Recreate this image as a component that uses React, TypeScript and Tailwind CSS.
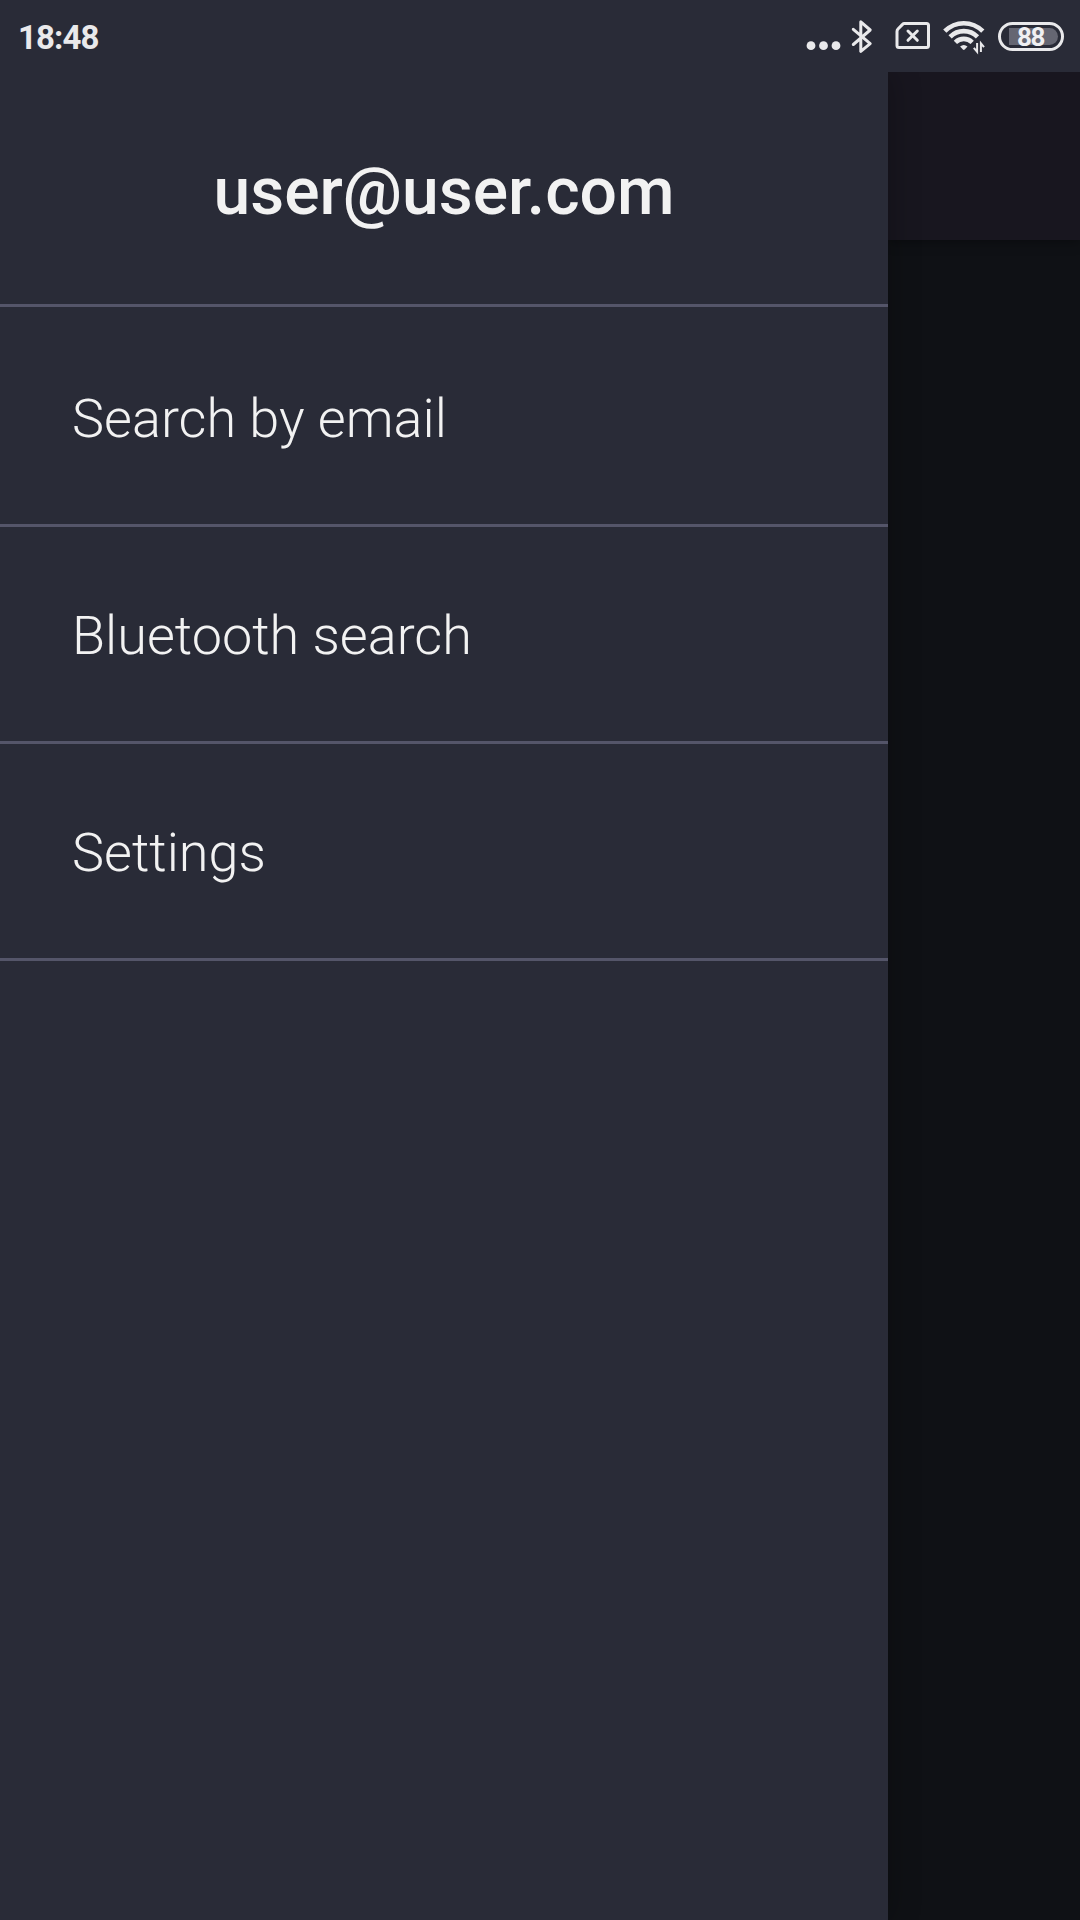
const menuItems = ["Search by email", "Bluetooth search", "Settings"];

function StatusIcons() {
  return (
    <div className="flex h-[72px] text-[#e9e9eb]">
      <svg width="42" height="72" viewBox="804 0 42 72" fill="currentColor">
        <circle cx="811" cy="45.7" r="4.4" />
        <circle cx="823.5" cy="45.7" r="4.4" />
        <circle cx="836" cy="45.7" r="4.4" />
      </svg>
      <svg width="40" height="72" viewBox="846 0 40 72" fill="none" stroke="currentColor" strokeWidth="3" strokeLinejoin="round" strokeLinecap="round">
        <path d="M853.3 29.3 870.2 43.6 860.8 51.4V21.8L870.2 30 853.3 44.5" />
      </svg>
      <svg width="52" height="72" viewBox="886 0 52 72" fill="none" stroke="currentColor" strokeWidth="3" strokeLinejoin="round" strokeLinecap="round">
        <path d="M904.2 23.5H926.5Q928.5 23.5 928.5 25.5V45.5Q928.5 47.5 926.5 47.5H899Q897 47.5 897 45.5V31.5Q897 30 898 29L902.5 24.4Q903.3 23.5 904.2 23.5Z" />
        <path d="M908 31 917.3 40.3M917.3 31 908 40.3" />
      </svg>
      <svg width="60" height="72" viewBox="938 0 60 72" fill="none" stroke="currentColor" strokeWidth="4.6">
        <path d="M944.8 31.2C955.5 20.5 972.1 20.5 982.8 31.2" />
        <path d="M950.1 36.9C957.8 29.2 969.8 29.2 977.5 36.9" />
        <path d="M955.4 42.4C960.1 37.7 967.5 37.7 972.2 42.4" />
        <path d="M960.1 46.6Q963.8 43.4 967.5 46.6L964.7 49.5Q963.8 50.4 962.9 49.5Z" fill="currentColor" stroke="none" />
        <path d="M977.1 43V51.7L973.8 47.9M980.9 52V43.3L984 47.2" strokeWidth="2" />
      </svg>
    </div>
  );
}

function Battery() {
  return (
    <div className="flex h-[29px] w-[66px] items-center rounded-full border-[3px] border-[#e9e9eb] pl-2">
      <div className="flex h-[17px] w-[49px] items-center rounded-l-[2px] rounded-r-full bg-[#656672] pl-[8px] pt-[2px] text-[26px] font-bold leading-none tracking-[-1.4px] text-[#f0f0f2]">
        88
      </div>
    </div>
  );
}

function StatusBar() {
  return (
    <header className="flex h-[72px] items-center justify-between bg-[#292b37] pl-[18px] pr-4">
      <span className="pt-[2px] text-[33px] font-bold leading-none tracking-[-0.9px] text-[#e9e9eb]">18:48</span>
      <div className="flex items-center">
        <StatusIcons />
        <Battery />
      </div>
    </header>
  );
}

export default function App() {
  return (
    <div className="flex h-[1920px] w-[1080px] flex-col overflow-hidden bg-[#0f1115] font-['Roboto',sans-serif]">
      <StatusBar />
      <div className="flex flex-1">
        <nav className="z-10 w-[888px] bg-[#292b37] text-[#f2f2f2] shadow-[0_0_30px_rgba(0,0,0,0.3)] [clip-path:inset(0_-40px_0_0)]">
          <h1 className="flex h-[235px] items-center justify-center border-b-[3px] border-[#545569] pt-2 text-[66px] font-medium leading-none">
            user@user.com
          </h1>
          <ul>
            {menuItems.map((label) => (
              <li
                key={label}
                className="flex h-[217px] items-center border-b-[3px] border-[#545569] pl-[72px] pt-1 text-[54px] font-light leading-none first:h-[220px] first:pt-[7px]"
              >
                {label}
              </li>
            ))}
          </ul>
        </nav>
        <main className="flex-1 overflow-hidden bg-[#0f1115]">
          <div className="h-[168px] bg-[#18161f] shadow-[0_1px_12px_rgba(0,0,0,0.4)]" />
        </main>
      </div>
    </div>
  );
}
